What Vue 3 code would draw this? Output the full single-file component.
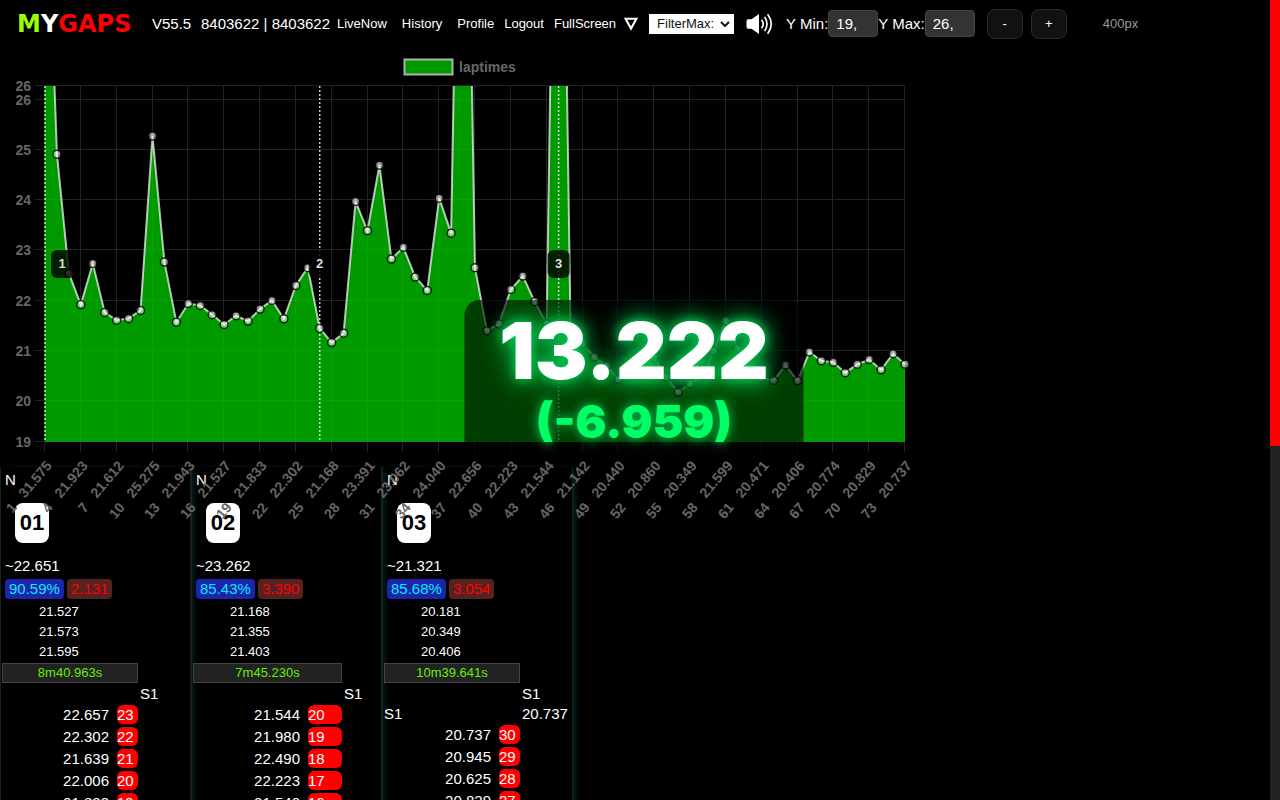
<template>
  <div class="page">
    <header class="topbar">
      <a class="logo" href="#"><span class="logo-m">M</span><span class="logo-y">Y</span><span class="logo-rest">GAPS</span></a>
      <span class="version">V55.5</span>
      <span class="ids">8403622 | 8403622</span>
      <nav class="links">
        <a
          v-for="link in links"
          :key="link.text"
          href="#"
          :class="{ wide: link.wide }"
        >{{ link.text }}</a>
      </nav>
      <button type="button" class="icon-btn" aria-label="Toggle menu">
        <svg width="14" height="14" viewBox="0 0 14 14">
          <path d="M1.6 1.8H12.4L7 11.6Z" fill="none" stroke="#fff" stroke-width="2" />
        </svg>
      </button>
      <div class="select-wrap">
        <select v-model="filterMax" class="filter" aria-label="Filter max">
          <option value="">FilterMax:</option>
          <option value="25">25</option>
          <option value="30">30</option>
        </select>
        <svg class="chevron" width="10" height="6" viewBox="0 0 10 6">
          <path d="M1 1L5 5L9 1" fill="none" stroke="#111" stroke-width="2" />
        </svg>
      </div>
      <button type="button" class="icon-btn speaker" aria-label="Sound">
        <svg width="28" height="22" viewBox="0 0 28 22">
          <path d="M0.5 8Q0.5 6.5 2 6.2H5.5L13 1V21L5.5 15.8H2Q0.5 15.5 0.5 14Z" fill="#fff" />
          <path
            d="M16 7.5Q18.5 11 16 14.5M19 4.5Q23 11 19 17.5M22 1.8Q28.5 11 22 20.2"
            fill="none"
            stroke="#fff"
            stroke-width="1.7"
            stroke-linecap="round"
          />
        </svg>
      </button>
      <div class="ranges">
        <label for="ymin">Y Min:</label>
        <input id="ymin" v-model="yMin" type="text" />
        <label for="ymax">Y Max:</label>
        <input id="ymax" v-model="yMax" type="text" />
      </div>
      <div class="zoom">
        <button type="button" @click="chartHeight -= 50">-</button>
        <button type="button" @click="chartHeight += 50">+</button>
      </div>
      <span class="height-label">{{ chartHeight }}px</span>
    </header>

    <section class="chart">
      <svg viewBox="0 0 920 480" role="img" aria-label="laptimes">
        <defs>
          <clipPath id="plot">
            <rect :x="left" :y="top" :width="right - left" :height="bottom - top" />
          </clipPath>
        </defs>

        <!-- legend -->
        <rect x="404.5" y="5.5" width="48" height="15" fill="#009900" stroke="#b2b2b2" stroke-width="2" />
        <text class="tick" x="459" y="18">laptimes</text>

        <!-- grid -->
        <g stroke="#222">
          <line v-for="t in yTicks" :key="t.y" :x1="left - 10" :x2="right" :y1="t.y" :y2="t.y" />
          <line v-for="t in xTicks" :key="t.x" :x1="t.x" :x2="t.x" :y1="top" :y2="bottom + 10" />
        </g>

        <!-- area -->
        <g clip-path="url(#plot)">
          <path :d="areaPath" fill="#00cc00" fill-opacity="0.75" />
          <path :d="linePath" fill="none" stroke="#fff" stroke-opacity="0.7" stroke-width="2" />
        </g>

        <!-- points -->
        <g v-for="p in points" :key="p.i">
          <circle :cx="p.x" :cy="p.y" r="4" fill="#fff" fill-opacity="0.5" stroke="#000" stroke-opacity="0.8" stroke-width="1.5" />
          <circle :cx="p.x" :cy="p.y - 1" r="2" fill="#fff" fill-opacity="0.3" />
        </g>

        <!-- session starts -->
        <g v-for="s in starts" :key="s.n">
          <line :x1="s.x" :x2="s.x" :y1="top" :y2="bottom" stroke="#fff" stroke-opacity="0.8" stroke-width="1.5" stroke-dasharray="2 2" />
          <rect :x="s.labelX - 11" y="196" width="22" height="28" rx="6" fill="#000" fill-opacity="0.8" />
          <text class="mark" :x="s.labelX" y="214">{{ s.n }}</text>
        </g>

        <text v-for="t in yTicks" :key="'y' + t.y" class="tick" text-anchor="end" :x="left - 14" :y="t.y + 5">{{ t.label }}</text>
        <text
          v-for="t in xTicks"
          :key="'x' + t.x"
          class="tick"
          text-anchor="end"
          :transform="`translate(${t.x + 8} ${bottom + 24}) rotate(-50)`"
        >{{ t.label }}</text>
      </svg>
    </section>

    <main class="sessions">
      <section v-for="s in sessions" :key="s.no" class="session">
        <div class="name">N</div>
        <div class="badge">{{ s.no }}</div>
        <div class="average">~{{ s.average }}</div>
        <div class="stats">
          <span class="consistency">{{ s.consistency }}</span>
          <span class="spread">{{ s.spread }}</span>
        </div>
        <ol class="best">
          <li v-for="b in s.best" :key="b">{{ b }}</li>
        </ol>
        <table>
          <colgroup>
            <col class="col-time" />
            <col :style="{ width: s.numberWidth + 'px' }" />
            <col />
          </colgroup>
          <tbody>
            <tr class="sector-row">
              <td colspan="2"><div class="total">{{ s.total }}</div></td>
              <td></td>
            </tr>
            <tr class="sector-row">
              <td colspan="2"></td>
              <td class="sector">S1</td>
            </tr>
            <tr v-if="s.sector" class="sector-row">
              <td colspan="2">S1</td>
              <td class="sector">{{ s.sector }}</td>
            </tr>
            <tr v-for="lap in s.laps" :key="lap.n" class="lap-row">
              <td class="time">{{ lap.time }}</td>
              <td><div class="lap-no">{{ lap.n }}</div></td>
              <td></td>
            </tr>
          </tbody>
        </table>
      </section>
    </main>

    <div class="timer">
      <div class="timer-main">13.222</div>
      <div class="timer-diff">(-6.959)</div>
    </div>

    <div class="scrollbar"><div class="thumb"></div></div>
  </div>
</template>

<script setup>
import { ref } from "vue";

const filterMax = ref("");
const yMin = ref("19,");
const yMax = ref("26,");
const chartHeight = ref(400);

const links = [
  { text: "LiveNow", wide: true },
  { text: "History", wide: true },
  { text: "Profile" },
  { text: "Logout" },
  { text: "FullScreen" },
];

// --- lap times, all sessions after each other ---
const times = [
  31.575, 24.914, 22.542, 21.923, 22.74, 21.767, 21.612, 21.648, 21.807, 25.275,
  22.768, 21.573, 21.943, 21.906, 21.721, 21.527, 21.701, 21.595, 21.833, 22.006,
  21.639, 22.302, 22.657, 21.45, 21.168, 21.355, 23.973, 23.391, 24.695, 22.828,
  23.062, 22.47, 22.204, 24.04, 23.344, 36.8, 22.656, 21.403, 21.54, 22.223,
  22.49, 21.98, 21.544, 37.5, 21.45, 21.142, 20.88, 20.7, 20.44, 20.62,
  20.9, 20.86, 20.483, 20.181, 20.349, 20.5, 21.0, 21.599, 21.05, 20.6,
  20.471, 20.415, 20.72, 20.406, 20.98, 20.807, 20.774, 20.569, 20.734, 20.829,
  20.625, 20.945, 20.737,
];

// --- chart geometry ---
const left = 45;
const right = 905;
const top = 32;
const bottom = 388;
const max = 26.27;
const min = 19.19;

const xOf = (i) => left + ((right - left) * i) / (times.length - 1);
const yOf = (v) => top + ((max - v) / (max - min)) * (bottom - top);

const points = times.map((v, i) => ({ i, x: xOf(i), y: yOf(v) })).filter((p) => p.y > top);
const linePath = "M" + times.map((v, i) => `${xOf(i)} ${yOf(v)}`).join("L");
const areaPath = `${linePath}L${right} ${bottom}L${left} ${bottom}Z`;

const yTicks = [max, 26, 25, 24, 23, 22, 21, 20, min].map((v) => ({
  y: Math.round(yOf(v)) - 0.5,
  label: Math.round(v),
}));

const gap = "\u00a0\u00a0\u00a0";
const xTicks = times
  .map((v, i) => ({ x: Math.round(xOf(i)) - 0.5, label: `${i + 1}${gap}${v.toFixed(3)}`, i }))
  .filter((t) => t.i % 3 === 0);

const starts = [
  { n: 1, x: xOf(0), labelX: 62 },
  { n: 2, x: xOf(23), labelX: xOf(23) },
  { n: 3, x: xOf(43), labelX: xOf(43) },
];

// --- sessions ---
function lapList(first, list) {
  return list.map((time, i) => ({ n: first - i, time }));
}

const sessions = [
  {
    no: "01",
    average: "22.651",
    consistency: "90.59%",
    spread: "2.131",
    best: ["21.527", "21.573", "21.595"],
    total: "8m40.963s",
    numberWidth: 22,
    laps: lapList(23, ["22.657", "22.302", "21.639", "22.006", "21.833"]),
  },
  {
    no: "02",
    average: "23.262",
    consistency: "85.43%",
    spread: "3.390",
    best: ["21.168", "21.355", "21.403"],
    total: "7m45.230s",
    numberWidth: 35,
    laps: lapList(20, ["21.544", "21.980", "22.490", "22.223", "21.540"]),
  },
  {
    no: "03",
    average: "21.321",
    consistency: "85.68%",
    spread: "3.054",
    best: ["20.181", "20.349", "20.406"],
    total: "10m39.641s",
    sector: "20.737",
    numberWidth: 22,
    laps: lapList(30, ["20.737", "20.945", "20.625", "20.829"]),
  },
];
</script>

<style>
body {
  margin: 0;
  background: #000;
  overflow: hidden;
}
</style>

<style scoped>
.page {
  position: relative;
  height: 100vh;
  overflow: hidden;
  background: #000;
  color: #fff;
  font-family: "Liberation Sans", Arial, sans-serif;
  font-size: 15px;
}

a {
  color: #fff;
  text-decoration: none;
}

.topbar {
  display: flex;
  align-items: center;
  height: 47px;
  padding-left: 17px;
  white-space: nowrap;
}

.logo {
  width: 119px;
  margin-right: 16px;
  font-family: "DejaVu Sans", sans-serif;
  font-size: 24px;
  line-height: 24px;
  font-weight: bold;
}
.logo-m {
  color: #9f0;
}
.logo-rest {
  color: #f00;
}

.version {
  width: 49px;
}
.ids {
  width: 136px;
}

.links {
  display: flex;
  gap: 10px;
  margin-right: 8px;
  font-size: 13px;
}
.links .wide {
  margin-right: 5px;
}

.icon-btn {
  display: flex;
  padding: 0;
  border: none;
  background: none;
  cursor: pointer;
}

.select-wrap {
  position: relative;
  margin: 0 12px 0 11px;
}
.filter {
  display: block;
  width: 85px;
  height: 20px;
  padding: 0 8px;
  border: none;
  border-radius: 0;
  background: #fff;
  color: #111;
  font-family: inherit;
  font-size: 13px;
  appearance: none;
}
.chevron {
  position: absolute;
  right: 4px;
  top: 7px;
  pointer-events: none;
}

.speaker {
  margin-right: 12px;
}

.ranges {
  display: flex;
  align-items: center;
}
.ranges input {
  box-sizing: border-box;
  width: 50px;
  height: 27px;
  padding: 0 7px;
  border: 1px solid #444;
  border-radius: 4px;
  background: #333;
  color: #fff;
  font-family: inherit;
  font-size: 15px;
}

.zoom {
  display: flex;
  gap: 8px;
  margin-left: 12px;
}
.zoom button {
  width: 36px;
  height: 30px;
  border: 1px solid #2a2a2a;
  border-radius: 8px;
  background: #111;
  color: #fff;
  font-family: inherit;
  font-size: 13px;
}

.height-label {
  margin-left: 36px;
  color: #999;
  font-size: 13px;
}

/* the slanted tick labels run over the top of the session columns */
.chart {
  position: relative;
  z-index: 1;
  max-width: 920px;
  margin: 7px 0 -67px;
  pointer-events: none;
}
.chart svg {
  display: block;
  width: 100%;
}
.tick {
  fill: #666;
  font-size: 14px;
  font-weight: bold;
}
.mark {
  fill: #ddd;
  font-size: 13px;
  font-weight: bold;
  text-anchor: middle;
}

.sessions {
  display: flex;
}
.session {
  box-sizing: border-box;
  width: 191px;
  height: 400px;
  border: solid #142222;
  border-width: 0 1px;
  box-shadow: 4px 0 8px -4px #0c4040;
}

.name {
  padding: 4px 4px 0;
  line-height: 17px;
}
.badge {
  width: 34px;
  height: 40px;
  margin: 15px 0 14px 14px;
  border-radius: 8px;
  background: #fff;
  color: #000;
  font-size: 22px;
  font-weight: bold;
  line-height: 40px;
  text-align: center;
}
.average {
  padding-left: 4px;
  line-height: 18px;
}
.stats {
  display: flex;
  gap: 3px;
  padding: 4px 4px 3px;
  line-height: 20px;
}
.stats span {
  padding: 0 4px;
  border-radius: 4px;
}
.consistency {
  background: #1c24ac;
  color: #0ef;
}
.spread {
  background: #522;
  color: #f00;
}
.best {
  margin: 0;
  padding: 0 0 0 38px;
  list-style: none;
  font-size: 13px;
  line-height: 20px;
}

table {
  width: 100%;
  margin-top: 1px;
  border-collapse: collapse;
  table-layout: fixed;
}
td {
  padding: 0 0 0 1px;
}
.col-time {
  width: 115px;
}
.total {
  box-sizing: border-box;
  height: 20px;
  border: 1px solid #444;
  background: #222;
  color: #6e0;
  font-size: 13px;
  line-height: 18px;
  text-align: center;
}
.sector-row {
  height: 20px;
}
.sector {
  padding-left: 2px;
}
.lap-row {
  height: 22px;
}
.time {
  padding-right: 7px;
  text-align: right;
}
.lap-no {
  height: 19px;
  border-radius: 6px;
  background: #f00;
  line-height: 19px;
}

.timer {
  position: absolute;
  z-index: 2;
  top: 300px;
  left: calc(50% - 6px);
  box-sizing: border-box;
  width: 339px;
  padding: 10px 0 0;
  border-radius: 15px 15px 0 0;
  background: rgba(0, 0, 0, 0.6);
  font-family: "Arial Black", Inter, sans-serif;
  font-weight: 900;
  text-align: center;
  transform: translateX(-50%);
}
.timer-main {
  font-size: 79px;
  line-height: 80px;
  text-shadow: 0 0 10px #00cc55, 0 0 20px #00bb4a, 0 0 30px #00aa44;
}
.timer-diff {
  color: #00ff66;
  font-size: 46px;
  line-height: 62px;
  text-shadow: 0 0 10px #00aa44, 0 0 15px #008833;
}

.scrollbar {
  position: absolute;
  top: 0;
  right: 0;
  bottom: 0;
  width: 10px;
  background: #222;
}
.thumb {
  height: 446px;
  background: #f00;
}
</style>
